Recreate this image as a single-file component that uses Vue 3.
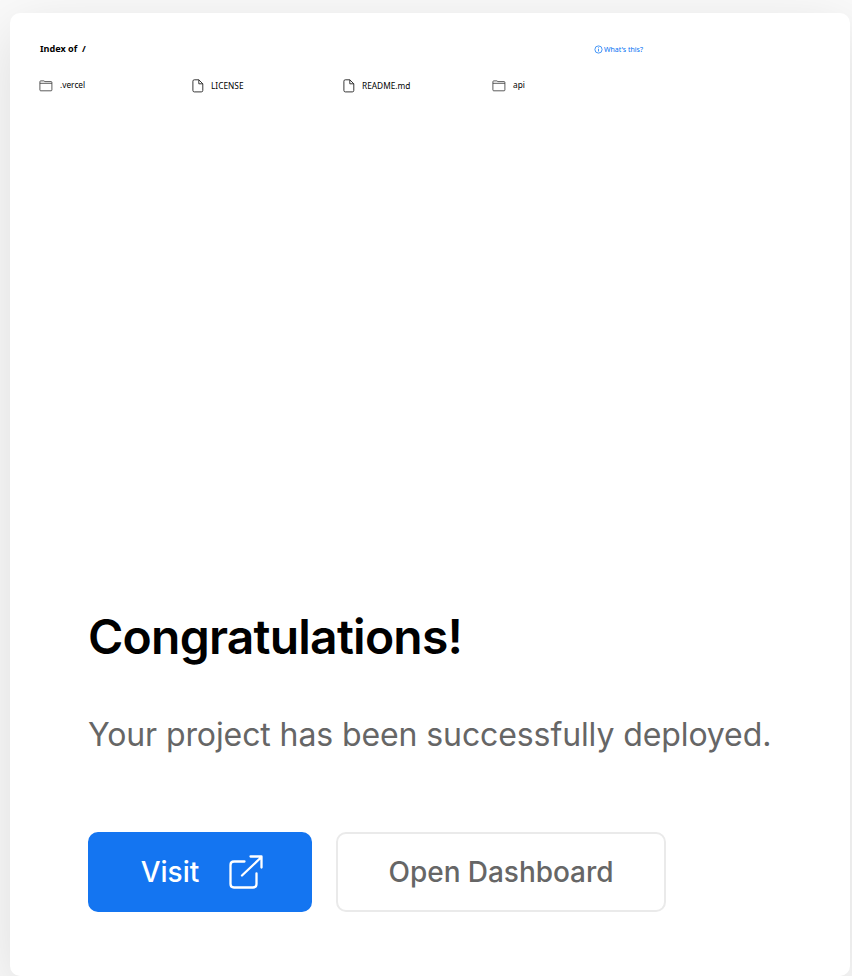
<script setup>
const files = [
  { name: '.vercel', kind: 'folder' },
  { name: 'LICENSE', kind: 'file' },
  { name: 'README.md', kind: 'file' },
  { name: 'api', kind: 'folder' },
]
</script>

<template>
  <main class="page">
    <section class="card">
      <div class="preview">
        <header class="index-head">
          <span class="index-title">Index of&nbsp; /</span>
          <a class="help">
            <svg class="help-icon" viewBox="0 0 10 10" fill="none" stroke="currentColor" stroke-width="0.8">
              <circle cx="5" cy="5" r="4" />
              <path d="M5 4.4v2.8M5 2.6v1" />
            </svg>
            <span>What's this?</span>
          </a>
        </header>
        <ul class="files">
          <li v-for="f in files" :key="f.name" class="entry" :class="f.kind">
            <svg v-if="f.kind === 'folder'" class="folder-icon" viewBox="0 0 14 12" fill="none" stroke="#333" stroke-width="0.8">
              <path d="M.9 9.9V1.7Q.9.9 1.7.9h3.2l1 .7h6.2q.8 0 .8.8v7.5q0 .9-.8.9H1.7q-.8 0-.8-.9zM.9 3.3h12" />
            </svg>
            <svg v-else class="file-icon" viewBox="0 0 12 14" fill="none" stroke="#222" stroke-width="0.9" stroke-linejoin="round">
              <path d="M6.8.8H2.3Q.9.8.9 2.2v9.2q0 1.5 1.4 1.5h7q1.5 0 1.5-1.5V4.8zM6.8.8v4h4" />
            </svg>
            <span class="name">{{ f.name }}</span>
          </li>
        </ul>
      </div>
      <div class="content">
        <h1>Congratulations!</h1>
        <p>Your project has been successfully deployed.</p>
        <div class="actions">
          <button class="btn primary">
            <span>Visit</span>
            <svg class="visit-icon" viewBox="0 0 36 36" fill="none" stroke="currentColor" stroke-width="2.3" stroke-linecap="round" stroke-linejoin="round">
              <path d="M16.5 7.5H6q-3.5 0-3.5 3.5v19q0 3.5 3.5 3.5h19q3.5 0 3.5-3.5V19.5M14 21.5 33.5 3M22.5 2.5h11v11" />
            </svg>
          </button>
          <button class="btn secondary">Open Dashboard</button>
        </div>
      </div>
    </section>
  </main>
</template>

<style>
body {
  margin: 0;
  overflow: hidden;
}
</style>

<style scoped>
.page {
  box-sizing: border-box;
  width: 852px;
  height: 976px;
  padding: 13px 2px 0 10px;
  overflow: hidden;
  background: #fafafa;
  font-family: Inter, "Liberation Sans", sans-serif;
}
.card {
  box-sizing: border-box;
  height: 963px;
  border-radius: 10px;
  background: #fff;
  box-shadow: 0 16px 60px rgba(0, 0, 0, 0.12);
}
.preview {
  box-sizing: border-box;
  height: 586px;
  padding: 29px 30px 0 29px;
  color: #000;
  font-family: "Noto Sans", sans-serif;
  font-size: 8.3px;
}
.index-head {
  display: flex;
  width: 604px;
  height: 14px;
  justify-content: space-between;
  align-items: center;
}
.index-title {
  padding: 0 0 2px 1px;
  font-size: 9.1px;
  font-weight: 700;
}
.help {
  display: flex;
  align-items: center;
  gap: 1px;
  color: #0070f3;
  font-size: 7px;
}
.help-icon {
  width: 9px;
  height: 9px;
}
.files {
  display: grid;
  grid-template-columns: 153px 151px 149px 100px;
  margin: 22px 0 0;
  padding: 0;
  list-style: none;
}
.entry {
  display: flex;
  height: 16px;
  align-items: center;
  gap: 7px;
}
.entry.folder {
  height: 15px;
}
.name {
  padding-bottom: 2px;
}
.folder-icon {
  width: 14px;
  height: 12px;
}
.file-icon {
  width: 12px;
  height: 14px;
}
.content {
  padding: 0 78px;
}
h1 {
  margin: 0;
  color: #000;
  font-size: 48px;
  font-weight: 600;
  line-height: 76px;
  letter-spacing: -0.77px;
}
p {
  margin: 35px 0 0;
  color: #666;
  font-size: 32px;
  line-height: 50px;
  letter-spacing: -0.1px;
  white-space: nowrap;
}
.actions {
  display: flex;
  gap: 24px;
  margin-top: 72px;
}
.btn {
  display: flex;
  box-sizing: border-box;
  height: 80px;
  align-items: center;
  justify-content: center;
  border: 2px solid #eaeaea;
  border-radius: 10px;
  padding: 0;
  font-family: inherit;
  font-size: 28px;
  font-weight: 500;
}
.primary {
  width: 224px;
  gap: 29px;
  padding-left: 5px;
  border-color: #1475f1;
  background: #1475f1;
  color: #fff;
}
.secondary {
  width: 330px;
  background: #fff;
  color: #666;
  letter-spacing: -0.05px;
}
.visit-icon {
  width: 36px;
  height: 36px;
}
</style>
